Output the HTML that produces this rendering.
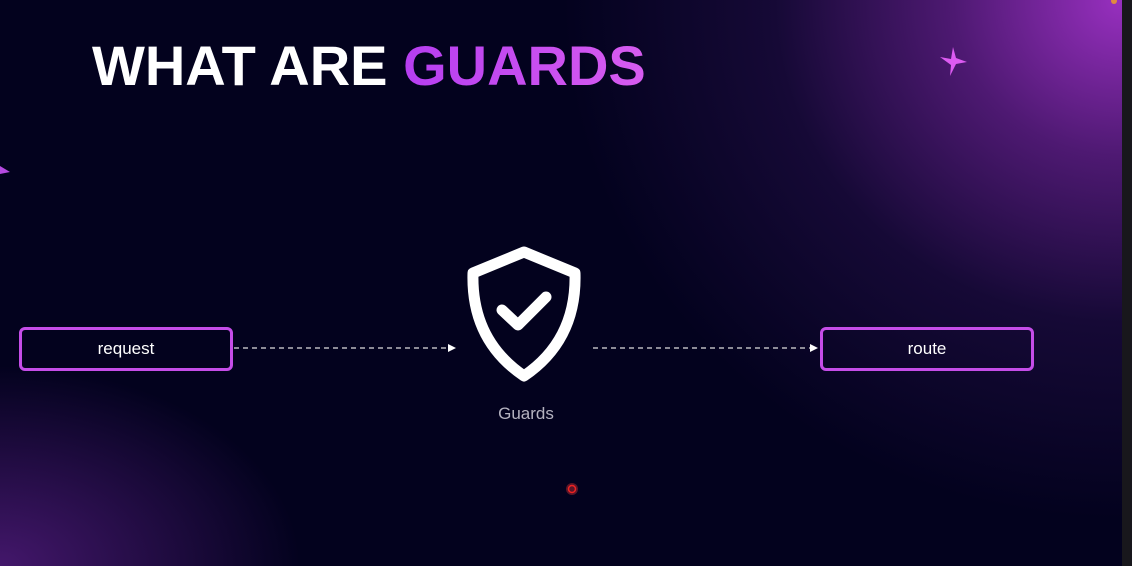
<!DOCTYPE html>
<html><head><style>
html,body{margin:0;padding:0}
body{width:1132px;height:566px;overflow:hidden;position:relative;background:#03021e;font-family:"Liberation Sans",sans-serif}
.bg{position:absolute;inset:0;background:
radial-gradient(ellipse 560px 520px at 1122px 0px,rgba(160,50,200,0.95) 0%,rgba(110,35,150,0.7) 30%,rgba(50,20,90,0.4) 62%,rgba(3,2,30,0) 100%),
radial-gradient(ellipse 300px 200px at 0px 566px,rgba(120,40,170,0.55) 0%,rgba(3,2,30,0) 100%);}
.strip{position:absolute;right:0;top:0;width:10px;height:566px;background:#18171c}
h1{position:absolute;left:92px;top:33px;margin:0;font-size:56px;font-weight:900;color:#fff;letter-spacing:0}
h1 span{background:linear-gradient(90deg,#b63ef0,#d75cf0);-webkit-background-clip:text;color:transparent}
.box{position:absolute;top:327px;height:38px;border:3px solid #c54de8;border-radius:6px;color:#fff;font-size:17px;display:flex;align-items:center;justify-content:center}
.lbl{position:absolute;left:466px;top:404px;width:120px;text-align:center;color:#b5b3c0;font-size:17px}
</style></head><body>
<div class="bg"></div>
<div class="strip"></div>
<h1>WHAT ARE <span>GUARDS</span></h1>
<svg width="1132" height="566" style="position:absolute;left:0;top:0">
<path d="M953 47 L956 58 L967 62 L956 64 L950 76 L951 65 L940 57 L951 59 Z" fill="#dd5bf2"/>
<path d="M0 166 L10 172 L0 174 Z" fill="#b54ae0"/>
<circle cx="1114" cy="1" r="3" fill="#e08a40"/>
<line x1="234" y1="348" x2="448" y2="348" stroke="#ddd" stroke-width="1.3" stroke-dasharray="5 4"/>
<path d="M448 344 L456 348 L448 352 Z" fill="#fff"/>
<line x1="593" y1="348" x2="810" y2="348" stroke="#ddd" stroke-width="1.3" stroke-dasharray="5 4"/>
<path d="M810 344 L818 348 L810 352 Z" fill="#fff"/>
<path d="M524 252 L575 273 Q577 340 524 376 Q471 340 473 273 Z" fill="none" stroke="#fff" stroke-width="11" stroke-linejoin="round"/>
<path d="M502 310 L518 325 L546 297" fill="none" stroke="#fff" stroke-width="11" stroke-linecap="round" stroke-linejoin="round"/>
<circle cx="572" cy="489" r="6" fill="rgba(255,60,60,0.35)"/>
<circle cx="572" cy="489" r="3.5" fill="none" stroke="#e22" stroke-width="1.5"/>
</svg>
<div class="box" style="left:19px;width:208px">request</div>
<div class="box" style="left:820px;width:208px">route</div>
<div class="lbl">Guards</div>
</body></html>
